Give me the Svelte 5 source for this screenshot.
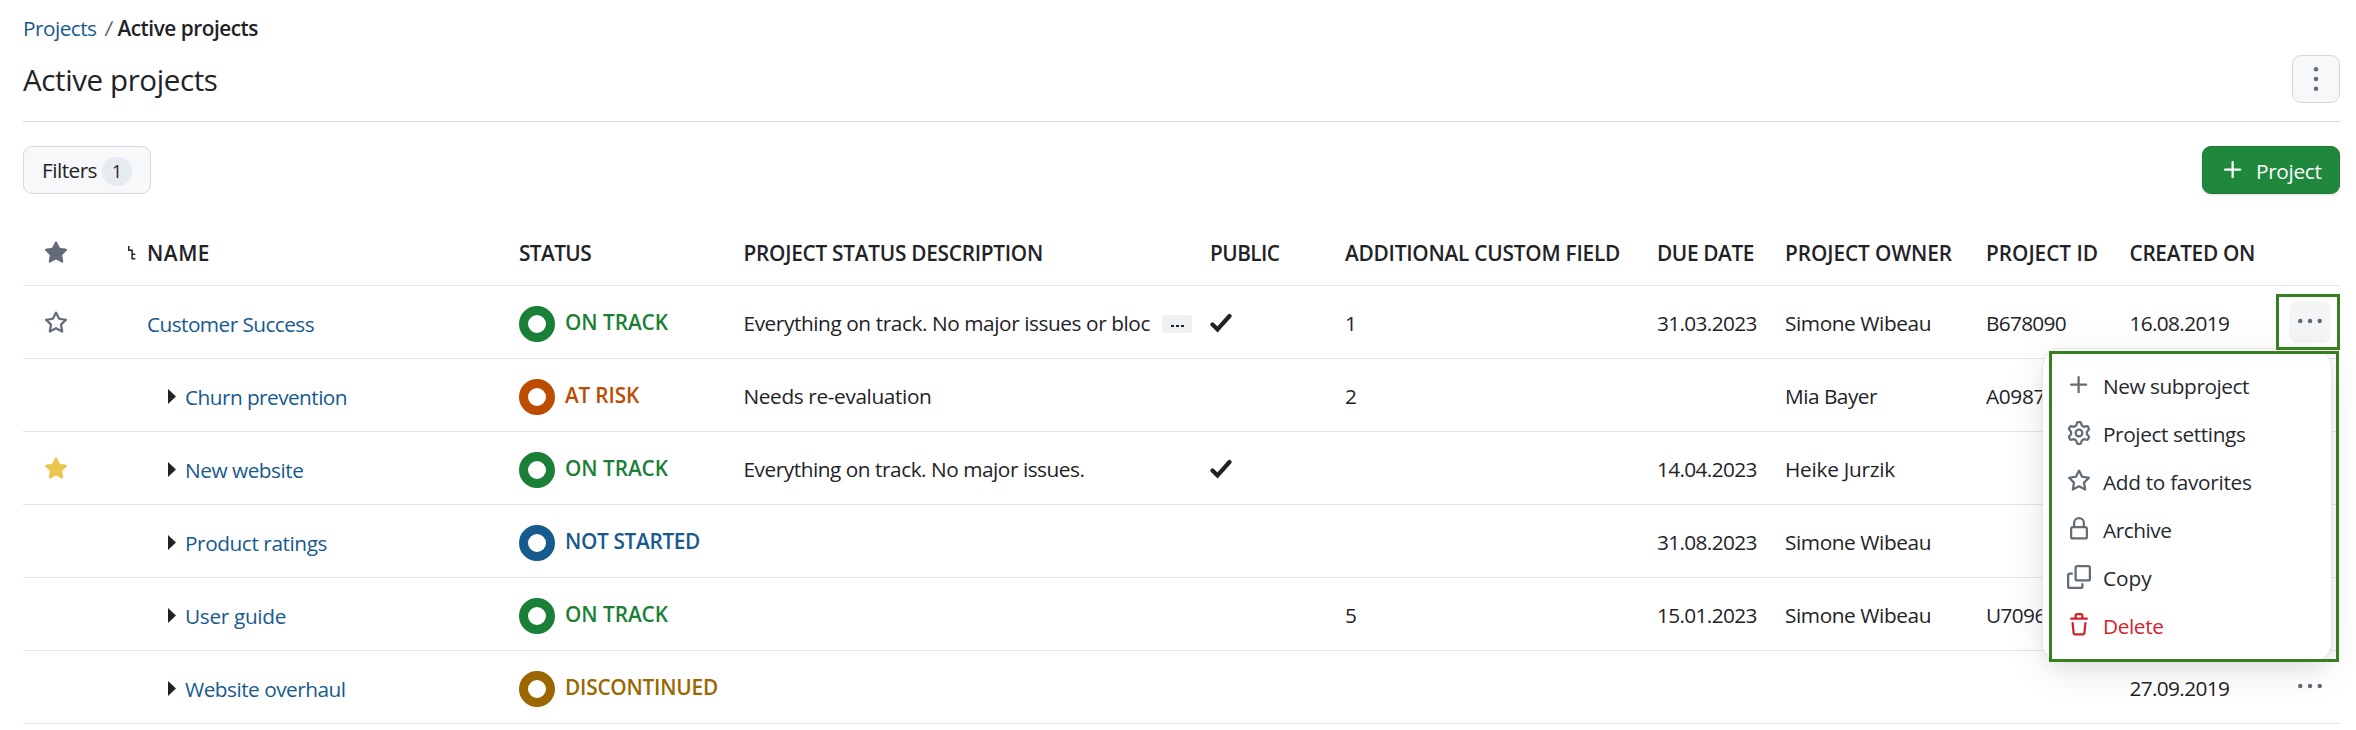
<script>
  const columns = [
    { label: 'STATUS', w: 72 },
    { label: 'PROJECT STATUS DESCRIPTION', w: 299.5 },
    { label: 'PUBLIC', w: 69.5 },
    { label: 'ADDITIONAL CUSTOM FIELD', w: 275 },
    { label: 'DUE DATE', w: 97 },
    { label: 'PROJECT OWNER', w: 167 },
    { label: 'PROJECT ID', w: 112 },
    { label: 'CREATED ON', w: 125.5 }
  ];

  const statuses = {
    ok: { label: 'ON TRACK', w: 103 },
    risk: { label: 'AT RISK', w: 74 },
    idle: { label: 'NOT STARTED', w: 135 },
    ended: { label: 'DISCONTINUED', w: 153 }
  };

  const simone = { text: 'Simone Wibeau', w: 146 };
  const rows = [
    { name: 'Customer Success', nw: 167, star: 'outline', status: 'ok', desc: 'Everything on track. No major issues or bloc', dw: 406.5, more: true, pub: true, field: '1', due: '31.03.2023', owner: simone, id: 'B678090', iw: 80, created: '16.08.2019', open: true },
    { name: 'Churn prevention', nw: 162, child: true, status: 'risk', desc: 'Needs re-evaluation', dw: 188, field: '2', owner: { text: 'Mia Bayer', w: 92 }, id: 'A0987', iw: 59 },
    { name: 'New website', nw: 118.5, child: true, star: 'fill', status: 'ok', desc: 'Everything on track. No major issues.', dw: 341, pub: true, due: '14.04.2023', owner: { text: 'Heike Jurzik', w: 110 } },
    { name: 'Product ratings', nw: 142, child: true, status: 'idle', due: '31.08.2023', owner: simone },
    { name: 'User guide', nw: 101, child: true, status: 'ok', field: '5', due: '15.01.2023', owner: simone, id: 'U7096', iw: 59.7 },
    { name: 'Website overhaul', nw: 160.5, child: true, status: 'ended', created: '27.09.2019', menu: true }
  ];

  const starShape = 'M8 .25a.75.75 0 0 1 .673.418l1.882 3.815 4.21.612a.75.75 0 0 1 .416 1.279l-3.046 2.97.719 4.192a.751.751 0 0 1-1.088.791L8 12.347l-3.766 1.98a.75.75 0 0 1-1.088-.79l.72-4.194L.818 6.374a.75.75 0 0 1 .416-1.28l4.21-.611L7.327.668A.75.75 0 0 1 8 .25Z';
  const icons = {
    starFill: starShape,
    star: starShape + 'm0 2.445L6.615 5.5a.75.75 0 0 1-.564.41l-3.097.45 2.24 2.184a.75.75 0 0 1 .216.664l-.528 3.084 2.769-1.456a.75.75 0 0 1 .698 0l2.77 1.456-.53-3.084a.75.75 0 0 1 .216-.664l2.24-2.183-3.096-.45a.75.75 0 0 1-.564-.41L8 2.694Z',
    plus: 'M7.75 2a.75.75 0 0 1 .75.75V7h4.25a.75.75 0 0 1 0 1.5H8.5v4.25a.75.75 0 0 1-1.5 0V8.5H2.75a.75.75 0 0 1 0-1.5H7V2.75A.75.75 0 0 1 7.75 2Z',
    gear: 'M8 0a8.2 8.2 0 0 1 .701.031C9.444.095 9.99.645 10.16 1.29l.288 1.107c.018.066.079.158.212.224.231.114.454.243.668.386.123.082.233.09.299.071l1.103-.303c.644-.176 1.392.021 1.82.63.27.385.506.792.704 1.218.315.675.111 1.422-.364 1.891l-.814.806c-.049.048-.098.147-.088.294.016.257.016.515 0 .772-.01.147.038.246.088.294l.814.806c.475.469.679 1.216.364 1.891a7.977 7.977 0 0 1-.704 1.217c-.428.61-1.176.807-1.82.63l-1.102-.302c-.067-.019-.177-.011-.3.071a5.909 5.909 0 0 1-.668.386c-.133.066-.194.158-.211.224l-.29 1.106c-.168.646-.715 1.196-1.458 1.26a8.006 8.006 0 0 1-1.402 0c-.743-.064-1.289-.614-1.458-1.26l-.289-1.106c-.018-.066-.079-.158-.212-.224a5.738 5.738 0 0 1-.668-.386c-.123-.082-.233-.09-.299-.071l-1.103.303c-.644.176-1.392-.021-1.82-.63a8.12 8.12 0 0 1-.704-1.218c-.315-.675-.111-1.422.363-1.891l.815-.806c.05-.048.098-.147.088-.294a6.214 6.214 0 0 1 0-.772c.01-.147-.038-.246-.088-.294l-.815-.806C.635 6.045.431 5.298.746 4.623a7.92 7.92 0 0 1 .704-1.217c.428-.61 1.176-.807 1.82-.63l1.102.302c.067.019.177.011.3-.071.214-.143.437-.272.668-.386.133-.066.194-.158.211-.224l.29-1.106C6.009.645 6.556.095 7.299.03 7.53.01 7.764 0 8 0Zm-.571 1.525c-.036.003-.108.036-.137.146l-.289 1.105c-.147.561-.549.967-.998 1.189-.173.086-.34.183-.5.29-.417.278-.97.423-1.529.27l-1.103-.303c-.109-.03-.175.016-.195.045-.22.312-.412.644-.573.99-.014.031-.021.11.059.19l.815.806c.411.406.562.957.53 1.456a4.709 4.709 0 0 0 0 .582c.032.499-.119 1.05-.53 1.456l-.815.806c-.081.08-.073.159-.059.19.162.346.353.677.573.989.02.03.085.076.195.046l1.102-.303c.56-.153 1.113-.008 1.53.27.161.107.328.204.501.29.447.222.85.629.997 1.189l.289 1.105c.029.109.101.143.137.146a6.6 6.6 0 0 0 1.142 0c.036-.003.108-.036.137-.146l.289-1.105c.147-.561.549-.967.998-1.189.173-.086.34-.183.5-.29.417-.278.97-.423 1.529-.27l1.103.303c.109.029.175-.016.195-.045.22-.313.411-.644.573-.99.014-.031.021-.11-.059-.19l-.815-.806c-.411-.406-.562-.957-.53-1.456a4.709 4.709 0 0 0 0-.582c-.032-.499.119-1.05.53-1.456l.815-.806c.081-.08.073-.159.059-.19a6.464 6.464 0 0 0-.573-.989c-.02-.03-.085-.076-.195-.046l-1.102.303c-.56.153-1.113.008-1.53-.27a4.44 4.44 0 0 0-.501-.29c-.447-.222-.85-.629-.997-1.189l-.289-1.105c-.029-.11-.101-.143-.137-.146a6.6 6.6 0 0 0-1.142 0ZM11 8a3 3 0 1 1-6 0 3 3 0 0 1 6 0ZM9.5 8a1.5 1.5 0 1 0-3.001.001A1.5 1.5 0 0 0 9.5 8Z',
    lock: 'M4 4a4 4 0 0 1 8 0v2h.25c.966 0 1.75.784 1.75 1.75v5.5A1.75 1.75 0 0 1 12.25 15h-8.5A1.75 1.75 0 0 1 2 13.25v-5.5C2 6.784 2.784 6 3.75 6H4Zm8.25 3.5h-8.5a.25.25 0 0 0-.25.25v5.5c0 .138.112.25.25.25h8.5a.25.25 0 0 0 .25-.25v-5.5a.25.25 0 0 0-.25-.25ZM10.5 6V4a2.5 2.5 0 1 0-5 0v2Z',
    copy: 'M0 6.75C0 5.784.784 5 1.75 5h1.5a.75.75 0 0 1 0 1.5h-1.5a.25.25 0 0 0-.25.25v7.5c0 .138.112.25.25.25h7.5a.25.25 0 0 0 .25-.25v-1.5a.75.75 0 0 1 1.5 0v1.5A1.75 1.75 0 0 1 9.25 16h-7.5A1.75 1.75 0 0 1 0 14.25ZM5 1.75C5 .784 5.784 0 6.75 0h7.5C15.216 0 16 .784 16 1.75v7.5A1.75 1.75 0 0 1 14.25 11h-7.5A1.75 1.75 0 0 1 5 9.25Zm1.75-.25a.25.25 0 0 0-.25.25v7.5c0 .138.112.25.25.25h7.5a.25.25 0 0 0 .25-.25v-7.5a.25.25 0 0 0-.25-.25Z',
    trash: 'M11 1.75V3h2.25a.75.75 0 0 1 0 1.5H2.75a.75.75 0 0 1 0-1.5H5V1.75C5 .784 5.784 0 6.75 0h2.5C10.216 0 11 .784 11 1.75ZM4.496 6.675l.66 6.6a.25.25 0 0 0 .249.225h5.19a.25.25 0 0 0 .249-.225l.66-6.6a.75.75 0 0 1 1.492.149l-.66 6.6A1.748 1.748 0 0 1 10.595 15h-5.19a1.75 1.75 0 0 1-1.741-1.575l-.66-6.6a.75.75 0 1 1 1.492-.15ZM6.5 1.75V3h3V1.75a.25.25 0 0 0-.25-.25h-2.5a.25.25 0 0 0-.25.25Z'
  };

  const menuItems = [
    { icon: 'plus', label: 'New subproject', w: 146 },
    { icon: 'gear', label: 'Project settings', w: 142.5 },
    { icon: 'star', label: 'Add to favorites', w: 148.5 },
    { icon: 'lock', label: 'Archive', w: 68.5 },
    { icon: 'copy', label: 'Copy', w: 48.5 },
    { icon: 'trash', label: 'Delete', w: 60.5, danger: true }
  ];

  // Tunes letter spacing so a label takes its nominal width in any font.
  function fit(node, width) {
    if (!width) return;
    const natural = node.getBoundingClientRect().width;
    node.style.letterSpacing = `${(width - natural) / node.textContent.length}px`;
  }
</script>

{#snippet text(value, width)}<span class="t" use:fit={width}>{value}</span>{/snippet}

{#snippet icon(name)}
  <svg class="icon" width="24" height="24" viewBox="0 0 16 16" fill="currentColor" aria-hidden="true"><path fill-rule="evenodd" d={icons[name]} /></svg>
{/snippet}

{#snippet dots(vertical)}
  <svg class="icon" class:vertical width="24" height="24" viewBox="0 0 16 16" fill="currentColor" aria-hidden="true">
    <circle cx="1.5" cy="8" r="1.5" /><circle cx="8" cy="8" r="1.5" /><circle cx="14.5" cy="8" r="1.5" />
  </svg>
{/snippet}

<main>
  <nav>
    <a href="#projects">{@render text('Projects', 73.5)}</a>
    <span class="slash">/</span>
    <strong>{@render text('Active projects', 140.5)}</strong>
  </nav>

  <header>
    <h1>{@render text('Active projects', 194.5)}</h1>
    <button class="kebab" aria-label="More">{@render dots(true)}</button>
  </header>

  <div class="toolbar">
    <button class="filters">{@render text('Filters', 55)}<span class="count">1</span></button>
    <button class="create">{@render icon('plus')}{@render text('Project', 65.5)}</button>
  </div>

  <section class="table">
    <div class="row head">
      <div class="fav">{@render icon('starFill')}</div>
      <div class="tree">
        <svg width="8" height="14" viewBox="0 0 8 14" fill="none" stroke="currentColor" stroke-width="1.5"><path d="M.8 0v4.300h3.300V12.800h3.200M4.100 8.300h3.200" /></svg>
      </div>
      <div class="name">{@render text('NAME', 63)}</div>
      {#each columns as c}
        <div>{@render text(c.label, c.w)}</div>
      {/each}
      <div></div>
    </div>

    {#each rows as r}
      <div class="row">
        <div class="fav" class:gold={r.star === 'fill'}>
          {#if r.star}{@render icon(r.star === 'fill' ? 'starFill' : 'star')}{/if}
        </div>
        <div></div>
        <div class="name" class:child={r.child}>
          {#if r.child}<svg width="8" height="15" viewBox="0 0 8 15"><path d="M0 0l8 7.500-8 7.500z" fill="currentColor" /></svg>{/if}
          <a href="#project">{@render text(r.name, r.nw)}</a>
        </div>
        <div class="status {r.status}">
          <i class="ring"></i>{@render text(statuses[r.status].label, statuses[r.status].w)}
        </div>
        <div class="cell">
          {#if r.desc}{@render text(r.desc, r.dw)}{/if}
          {#if r.more}<button class="more" aria-label="Expand"><i></i><i></i><i></i></button>{/if}
        </div>
        <div class="cell">
          {#if r.pub}<svg class="check" width="22" height="20" viewBox="0 0 22 20" fill="none" stroke="currentColor" stroke-width="4.2"><path d="M2.500 11.500l5 5L19.500 3" stroke-linecap="round" /></svg>{/if}
        </div>
        <div class="cell">{r.field ?? ''}</div>
        <div class="cell">{#if r.due}{@render text(r.due, 99.7)}{/if}</div>
        <div class="cell">{#if r.owner}{@render text(r.owner.text, r.owner.w)}{/if}</div>
        <div class="cell">{#if r.id}{@render text(r.id, r.iw)}{/if}</div>
        <div class="cell">{#if r.created}{@render text(r.created, 99.7)}{/if}</div>
        <div class="actions">
          {#if r.open || r.menu}
            <button class="dots" class:active={r.open} aria-label="Row menu">{@render dots(false)}</button>
          {/if}
          {#if r.open}
            <div class="menu">
              {#each menuItems as m}
                <div class="item" class:danger={m.danger}>{@render icon(m.icon)}{@render text(m.label, m.w)}</div>
              {/each}
            </div>
            <div class="mark mark-button"></div>
            <div class="mark mark-menu"></div>
          {/if}
        </div>
      </div>
    {/each}
  </section>
</main>

<style>
  :global(body) { background: #fff; }
  main {
    box-sizing: border-box;
    height: 730px;
    padding: 13px 16px 0 23px;
    overflow: hidden;
    font-family: "Open Sans", "Noto Sans", sans-serif;
    font-size: 20.8px;
    line-height: 30px;
    color: #1f2328;
    white-space: nowrap;
  }
  button { font: inherit; color: inherit; padding: 0; border: 0; background: none; box-sizing: border-box; }
  a { color: #175a8e; text-decoration: none; }
  .t { display: inline-block; }
  .icon { display: block; flex: none; }
  .vertical { transform: rotate(90deg); }

  nav { display: flex; height: 30px; }
  nav strong { font-weight: 600; }
  .slash { width: 8px; margin: 0 5px 0 8px; color: #59636e; transform: skewX(-6deg); }

  header {
    display: flex;
    justify-content: space-between;
    align-items: center;
    height: 78px;
    border-bottom: 1px solid #d8dce1;
  }
  h1 { margin: 0; font-size: 29.5px; font-weight: 400; line-height: 40px; padding-bottom: 5px; }
  .kebab {
    display: grid; place-items: center;
    width: 48px; height: 48px; margin-bottom: 6px;
    border: 1px solid #d1d9e0; border-radius: 9px;
    background: #f6f8fa; color: #636c76;
  }

  .toolbar { display: flex; justify-content: space-between; padding-top: 24px; }
  .filters, .create { display: flex; align-items: center; height: 48px; border-radius: 9px; }
  .filters { width: 128px; padding-left: 18px; border: 1px solid #d1d9e0; background: #f6f8fa; }
  .count {
    width: 30px; height: 29px; margin: 3px 0 0 5px; border-radius: 15px;
    background: #e7eaef; font-size: 17.5px; line-height: 29px; text-align: center;
  }
  .create {
    width: 138px; padding-left: 18px; gap: 11px;
    border: 1px solid #1f7a37; background: #1f883d; color: #fff;
    box-shadow: 0 1px 3px rgba(31, 35, 40, .14);
  }
  .create .t { padding-top: 2px; }

  .table { padding-top: 27px; }
  .row {
    display: grid;
    grid-template-columns: 105px 19px 372px 224.5px 466.5px 135px 312px 128px 201px 143.5px 147.500px 63px;
    align-items: center;
    height: 72px;
    border-bottom: 1px solid #e3e5e8;
  }
  .head { height: 64px; font-weight: 550; }
  .fav { padding-left: 21px; color: #636c76; }
  .row:not(.head) .fav { padding-top: 1px; }
  .row .gold { color: #eac54f; }
  .tree svg { display: block; }
  .row:not(.head) .name { display: flex; align-items: center; padding-top: 3px; }
  .row:not(.head) .child { padding-left: 21px; gap: 9px; }
  .status { display: flex; align-items: center; gap: 10px; font-weight: 550; }
  .status .t { margin-top: -1px; }
  .ring {
    box-sizing: border-box; width: 36px; height: 36px; margin-top: 4px;
    border: 9px solid currentColor; border-radius: 50%;
  }
  .ok { color: #1a7f37; }
  .risk { color: #bc4c00; }
  .idle { color: #175a8e; }
  .ended { color: #9a6700; }
  .cell { display: flex; align-items: center; padding-top: 2px; }
  .check { display: block; }
  .more {
    display: flex; justify-content: center; align-items: flex-end; gap: 2px;
    width: 30px; height: 18px; margin: 2px 0 0 12px; padding-bottom: 6px;
    border-radius: 2px; background: #eef0f2;
  }
  .more i { width: 3px; height: 2px; background: #1f2328; }

  .actions { position: relative; height: 72px; }
  .dots {
    display: grid; place-items: center;
    width: 42px; height: 42px; margin: 15px 0 0 12px; padding-bottom: 2px;
    border-radius: 9px; color: #636c76;
  }
  .active { background: #f3f5f7; }
  .menu {
    position: absolute; z-index: 2; top: 63px; right: 9px;
    box-sizing: border-box; width: 288px; height: 312px; padding: 12px 0 0 24px;
    border-radius: 18px; background: #fff;
    box-shadow: 0 0 0 1px #e2e6ea, 0 9px 18px -4px rgba(37, 41, 46, .06), 0 9px 36px rgba(37, 41, 46, .12);
  }
  .item { display: flex; align-items: center; gap: 12px; height: 48px; color: #636c76; }
  .item .t { color: #25292e; padding-top: 1px; }
  .danger, .danger .t { color: #d1242f; }
  .mark { position: absolute; z-index: 3; box-sizing: border-box; border: 3px solid #37801f; }
  .mark-button { top: 8px; right: 0; width: 64px; height: 56px; }
  .mark-menu { top: 65px; right: 1px; width: 290px; height: 311px; }
</style>
